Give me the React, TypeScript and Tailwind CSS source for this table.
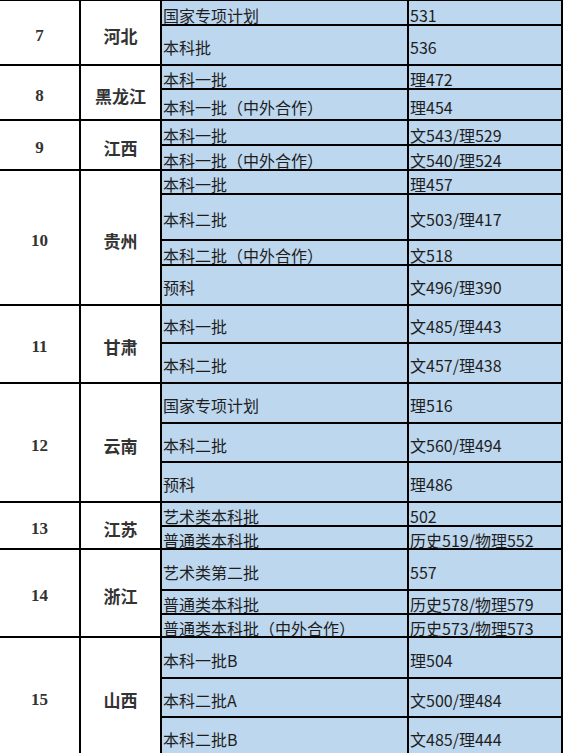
type Sub = { name: string; score: string; h: number };
type Group = { no: string; prov: string; rows: Sub[] };

const GROUPS: Group[] = [
  {
    no: "7",
    prov: "河北",
    rows: [
      { name: "国家专项计划", score: "531", h: 23 },
      { name: "本科批", score: "536", h: 38 },
    ],
  },
  {
    no: "8",
    prov: "黑龙江",
    rows: [
      { name: "本科一批", score: "理472", h: 22 },
      { name: "本科一批（中外合作）", score: "理454", h: 29 },
    ],
  },
  {
    no: "9",
    prov: "江西",
    rows: [
      { name: "本科一批", score: "文543/理529", h: 23 },
      { name: "本科一批（中外合作）", score: "文540/理524", h: 23 },
    ],
  },
  {
    no: "10",
    prov: "贵州",
    rows: [
      { name: "本科一批", score: "理457", h: 22 },
      { name: "本科二批", score: "文503/理417", h: 44 },
      { name: "本科二批（中外合作）", score: "文518", h: 23 },
      { name: "预科", score: "文496/理390", h: 38 },
    ],
  },
  {
    no: "11",
    prov: "甘肃",
    rows: [
      { name: "本科一批", score: "文485/理443", h: 36 },
      { name: "本科二批", score: "文457/理438", h: 38 },
    ],
  },
  {
    no: "12",
    prov: "云南",
    rows: [
      { name: "国家专项计划", score: "理516", h: 38 },
      { name: "本科二批", score: "文560/理494", h: 37 },
      { name: "预科", score: "理486", h: 38 },
    ],
  },
  {
    no: "13",
    prov: "江苏",
    rows: [
      { name: "艺术类本科批", score: "502", h: 22 },
      { name: "普通类本科批", score: "历史519/物理552", h: 21 },
    ],
  },
  {
    no: "14",
    prov: "浙江",
    rows: [
      { name: "艺术类第二批", score: "557", h: 39 },
      { name: "普通类本科批", score: "历史578/物理579", h: 22 },
      { name: "普通类本科批（中外合作）", score: "历史573/物理573", h: 21 },
    ],
  },
  {
    no: "15",
    prov: "山西",
    rows: [
      { name: "本科一批B", score: "理504", h: 39 },
      { name: "本科二批A", score: "文500/理484", h: 37 },
      { name: "本科二批B", score: "文485/理444", h: 38 },
    ],
  },
];

function SubRow({ row, first }: { row: Sub; first: boolean }) {
  // separator line sits on top of every sub-row but the first
  const height = first ? row.h : row.h + 2;
  return (
    <div
      className={`flex ${first ? "" : "border-t-2 border-black"}`}
      style={{ height }}
    >
      <div className="flex w-[247px] flex-none items-center whitespace-nowrap border-r-2 border-black pl-[1px] pt-[4px] leading-[16px]">
        {row.name}
      </div>
      <div className="flex flex-1 items-center whitespace-nowrap border-r-2 border-black pl-[1px] pt-[4px] leading-[16px]">
        {row.score}
      </div>
    </div>
  );
}

export default function App() {
  return (
    <div className="h-[753px] w-[563px] overflow-hidden border-t border-black bg-white font-['Noto_Sans_CJK_SC',sans-serif] text-[16px] text-[#1e1e1e] [text-spacing-trim:space-all]">
      {GROUPS.map((g) => (
        <div key={g.no} className="flex border-b-2 border-black">
          <div className="flex w-[81px] flex-none items-center justify-center border-r-2 border-black pt-[6px] font-['Liberation_Serif','Noto_Sans_CJK_SC',serif] text-[17px] font-bold text-[#333]">
            {g.no}
          </div>
          <div className="flex w-[81px] flex-none items-center justify-center border-r-2 border-black pt-[6px] text-[17px] font-bold text-[#333]">
            {g.prov}
          </div>
          <div className="flex flex-1 flex-col bg-[#bdd7ee]">
            {g.rows.map((r, i) => (
              <SubRow key={i} row={r} first={i === 0} />
            ))}
          </div>
        </div>
      ))}
    </div>
  );
}
